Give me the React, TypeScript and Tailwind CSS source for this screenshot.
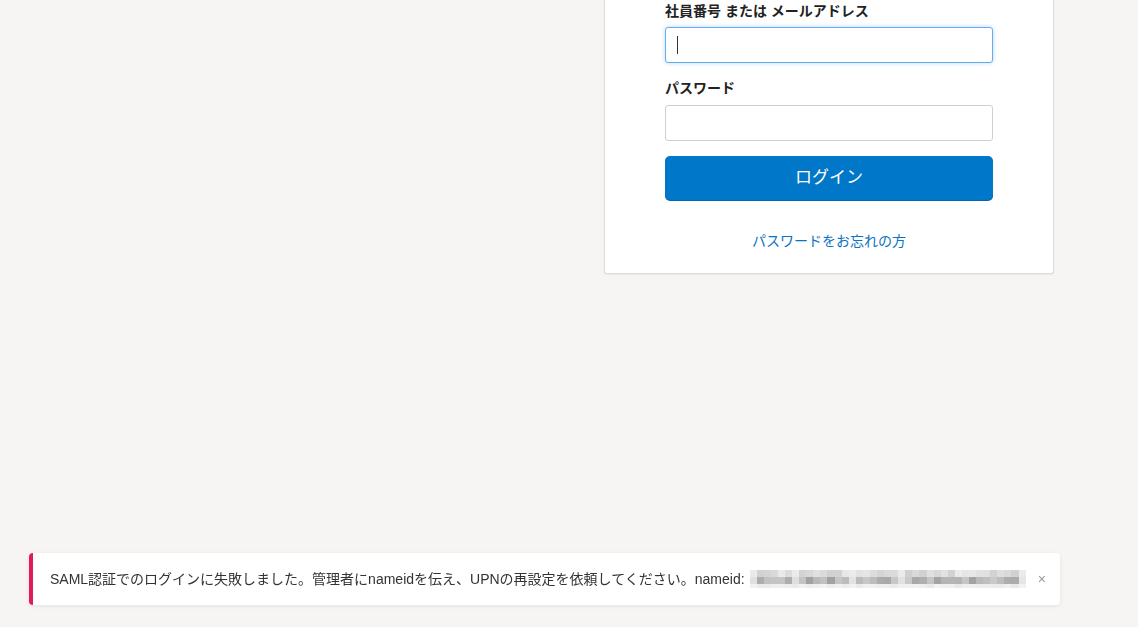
import { useMemo } from 'react'

const font = '"Liberation Sans", "Noto Sans CJK JP", sans-serif'

function Mosaic() {
  // redacted nameid: pixelated gray blocks
  const cols = useMemo(() => {
    let seed = 11
    const rnd = () => {
      seed = (seed * 9301 + 49297) % 233280
      return seed / 233280
    }
    return Array.from({ length: 39 }, (_, i) => {
      const gap = i === 0 || i === 6 || i === 14 || i === 21 || i === 38
      const mid = gap ? 215 + Math.floor(rnd() * 15) : 160 + Math.floor(rnd() * 45)
      const top = gap ? 235 : 208 + Math.floor(rnd() * 28)
      const bot = 232 + Math.floor(rnd() * 12)
      return { top, mid, bot }
    })
  }, [])
  const g = (v: number) => `rgb(${v},${v},${v})`
  return (
    <div className="flex h-[18px] w-[276px] shrink-0 blur-[0.4px]">
      {cols.map((c, i) => (
        <div key={i} className="flex flex-1 flex-col">
          <div className="h-[7px]" style={{ backgroundColor: g(c.top) }} />
          <div className="h-[7px]" style={{ backgroundColor: g(c.mid) }} />
          <div className="h-[4px]" style={{ backgroundColor: g(c.bot) }} />
        </div>
      ))}
    </div>
  )
}

export default function App() {
  return (
    <div className="min-h-[627px] w-full bg-[#f6f5f3] text-[#222]" style={{ fontFamily: font }}>
      <div className="flex">
        <div className="flex-1" />
        <div className="mr-[84px] w-[450px] rounded-b-[3px] border border-t-0 border-[#dcdcdc] bg-white px-[60px] pb-[22px] pt-[1px] shadow-[0_1px_2px_rgba(0,0,0,0.06)]">
          <label className="block text-[14px] font-bold leading-[20px]">社員番号 または メールアドレス</label>
          <div className="relative mt-[6px]">
            <input
              className="block h-[36px] w-full rounded-[3px] border border-[#66adf0] bg-white px-3 text-[14px] outline-none shadow-[0_0_4px_rgba(90,169,240,0.45)]"
            />
            <span className="absolute left-[12px] top-[9px] h-[18px] w-px bg-[#333]" />
          </div>

          <label className="mt-[15px] block text-[14px] font-bold leading-[20px]">パスワード</label>
          <input
            type="password"
            className="mt-[7px] block h-[36px] w-full rounded-[3px] border border-[#cfcfcf] bg-white px-3 text-[14px] outline-none"
          />

          <button className="mt-[15px] flex h-[44px] w-full items-center justify-center rounded-[5px] bg-[#0077c8] text-[17px] text-white shadow-[0_1px_0_#0066b0]">
            ログイン
          </button>

          <div className="mt-[31px] text-center text-[14px] leading-[20px]">
            <a href="#" className="text-[#0a72c4]">パスワードをお忘れの方</a>
          </div>
        </div>
      </div>

      <div className="fixed bottom-[22px] left-[29px] flex h-[52px] w-[1031px] items-center rounded-[4px] border-l-4 border-[#e2195b] bg-white pl-[17px] pr-[14px] shadow-[0_1px_4px_rgba(0,0,0,0.08)]">
        <p className="whitespace-nowrap text-[14px] text-[#333]">
          SAML認証でのログインに失敗しました。管理者にnameidを伝え、UPNの再設定を依頼してください。nameid:
        </p>
        <div className="ml-[5px]">
          <Mosaic />
        </div>
        <button className="ml-auto text-[14px] leading-none text-[#999]">×</button>
      </div>
    </div>
  )
}
